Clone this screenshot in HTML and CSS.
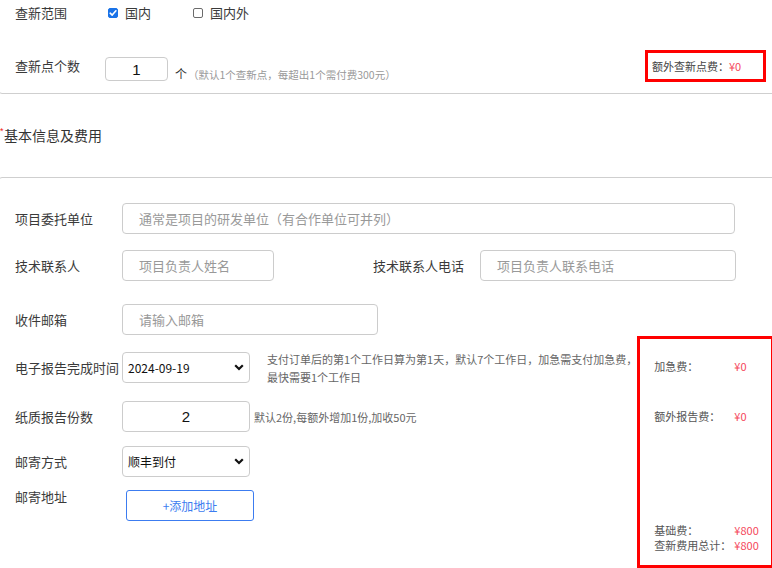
FILE: index.html
```html
<!DOCTYPE html>
<html lang="zh-CN">
<head>
<meta charset="utf-8">
<title>查新</title>
<link rel="stylesheet" href="styles.css">
</head>
<body>
<div class="top-box">
  <div class="row r-scope">
    <span class="label w93">查新范围</span>
    <span class="opt"><span class="cb checked"><svg width="8" height="8" viewBox="0 0 8 8"><path d="M1.2 4.2 L3.2 6.1 L6.9 1.8" fill="none" stroke="#fff" stroke-width="1.6" stroke-linecap="round" stroke-linejoin="round"/></svg></span>国内</span>
    <span class="opt opt2"><span class="cb"></span>国内外</span>
  </div>
  <div class="row r-count">
    <span class="label w90">查新点个数</span>
    <div class="num-input small">1</div>
    <span class="unit">个<span class="note">（默认1个查新点，每超出1个需付费300元）</span></span>
    <div class="fee-box">额外查新点费：<span class="money">¥0</span></div>
  </div>
</div>

<div class="title"><span class="star">*</span><span>基本信息及费用</span></div>

<div class="main-box">
  <div class="row fr">
    <span class="label">项目委托单位</span>
    <div class="field w613"><span class="ph">通常是项目的研发单位（有合作单位可并列）</span></div>
  </div>
  <div class="row fr mt16">
    <span class="label">技术联系人</span>
    <div class="field w152"><span class="ph">项目负责人姓名</span></div>
    <span class="label label2">技术联系人电话</span>
    <div class="field w256"><span class="ph">项目负责人联系电话</span></div>
  </div>
  <div class="row fr mt23">
    <span class="label">收件邮箱</span>
    <div class="field w256"><span class="ph">请输入邮箱</span></div>
  </div>
  <div class="lower">
    <div class="lower-left">
      <div class="row fr">
        <span class="label">电子报告完成时间</span>
        <div class="select"><span>2024-09-19</span><svg width="10" height="7" viewBox="0 0 10 7"><path d="M1.2 1.2 L5 5 L8.8 1.2" fill="none" stroke="#111" stroke-width="2.2"/></svg></div>
        <div class="hint hint-d">支付订单后的第1个工作日算为第1天，默认7个工作日，加急需支付加急费，<br>最快需要1个工作日</div>
      </div>
      <div class="row fr mt18">
        <span class="label">纸质报告份数</span>
        <div class="num-input big">2</div>
        <div class="hint hint-e">默认2份,每额外增加1份,加收50元</div>
      </div>
      <div class="row fr mt14">
        <span class="label">邮寄方式</span>
        <div class="select"><span>顺丰到付</span><svg width="10" height="7" viewBox="0 0 10 7"><path d="M1.2 1.2 L5 5 L8.8 1.2" fill="none" stroke="#111" stroke-width="2.2"/></svg></div>
      </div>
      <div class="row fr-top mt13">
        <span class="label addr-label">邮寄地址</span>
        <button class="add-btn" type="button">+添加地址</button>
      </div>
    </div>
    <div class="fee-panel">
      <div class="fee-group">
        <div class="fee-row"><span class="fee-label">加急费：</span><span class="money">¥0</span></div>
        <div class="fee-row mt35"><span class="fee-label">额外报告费：</span><span class="money">¥0</span></div>
      </div>
      <div class="fee-group">
        <div class="fee-row"><span class="fee-label">基础费：</span><span class="money">¥800</span></div>
        <div class="fee-row"><span class="fee-label">查新费用总计：</span><span class="money">¥800</span></div>
      </div>
    </div>
  </div>
</div>
</body>
</html>
```

FILE: styles.css
```css
* { box-sizing: border-box; }
html, body { margin: 0; padding: 0; overflow: hidden; }
body {
  width: 772px;
  height: 568px;
  background: #fff;
  color: #333;
  font-family: "Noto Sans CJK SC", "Noto Sans", "Liberation Sans", sans-serif;
  font-size: 13px;
}
.row { display: flex; align-items: center; }
.label { flex: none; width: 107px; font-size: 13px; line-height: 18px; color: #3a3a3a; white-space: nowrap; }
.w93 { width: 93px; }
.w90 { width: 90px; }

.top-box {
  margin: -10px -5px 0 -2px;
  border: 1px solid #cfcfcf;
  border-radius: 4px;
  padding: 9px 10px 11px 16px;
}
.r-scope { height: 26px; }
.opt { display: flex; align-items: center; font-size: 13px; line-height: 18px; color: #3a3a3a; }
.opt2 { margin-left: 42px; }
.cb {
  width: 10px; height: 10px; margin-right: 7px;
  border: 1.3px solid #6b6b6b; border-radius: 2px;
  display: flex; align-items: center; justify-content: center;
}
.cb.checked { background: #1a73e8; border-color: #1a73e8; }
.r-count { margin-top: 24px; height: 32px; }
.num-input {
  flex: none;
  border: 1px solid #ccc; border-radius: 4px;
  display: flex; align-items: center; justify-content: center;
  color: #111; font-family: "Liberation Sans", "Noto Sans CJK SC", sans-serif;
}
.num-input.small { width: 63px; height: 24px; margin-top: 6px; font-size: 15px; }
.num-input.big { width: 128px; height: 31px; font-size: 15px; }
.unit { align-self: flex-end; margin-left: 7px; font-size: 12px; line-height: 14px; color: #333; white-space: nowrap; }
.note { font-size: 10.5px; color: #999; margin-left: 1px; }
.fee-box {
  margin-left: auto;
  width: 121px; height: 32px;
  border: 3px solid #ff0000;
  padding-left: 4px;
  display: flex; align-items: center;
  font-size: 11px; color: #444; white-space: nowrap;
}
.money { color: #f5475b; font-size: 11px; }

.title { display: flex; align-items: flex-start; margin: 31px 0 32px 0; font-size: 14px; line-height: 20px; color: #333; }
.star { flex: none; color: #f02020; font-family: "Liberation Sans", sans-serif; font-size: 9px; line-height: 10px; width: 4px; margin-top: 1px; overflow: hidden; }

.main-box {
  margin: 0 -5px 0 -2px;
  border: 1px solid #cfcfcf;
  border-radius: 4px;
  padding: 25px 4px 20px 16px;
}
.fr { height: 31px; }
.fr-top { align-items: flex-start; }
.mt13 { margin-top: 13px; }
.mt14 { margin-top: 14px; }
.mt16 { margin-top: 16px; }
.mt18 { margin-top: 18px; }
.mt23 { margin-top: 23px; }
.mt35 { margin-top: 35px; }
.field {
  flex: none; height: 31px;
  border: 1px solid #ccc; border-radius: 4px;
  padding-left: 16px;
  display: flex; align-items: center;
}
.w613 { width: 613px; }
.w152 { width: 152px; }
.w256 { width: 256px; }
.ph { color: #999; font-size: 13px; white-space: nowrap; }
.label2 { margin-left: 99px; }

.lower { display: flex; align-items: flex-start; margin-top: 1px; }
.lower-left { flex: 1; padding-top: 16px; }
.select {
  flex: none; width: 128px; height: 31px;
  border: 1px solid #ccc; border-radius: 4px;
  padding: 0 5px 0 5px;
  display: flex; align-items: center; justify-content: space-between;
  font-size: 12px; color: #111;
}
.hint { font-size: 11px; line-height: 18px; color: #666; white-space: nowrap; }
.hint-d { margin-left: 17px; }
.hint-e { margin-left: 4px; }
.addr-label { margin-top: -1px; line-height: 16px; }
.add-btn {
  flex: none; margin: 0 0 0 4px;
  width: 128px; height: 31px;
  background: #fff;
  border: 1px solid #3c7cf0; border-radius: 3px;
  color: #3c7cf0; font-size: 12px;
  font-family: "Noto Sans CJK SC", sans-serif;
  padding: 0;
}
.fee-panel {
  flex: none; width: 137px; height: 232px;
  border: 3px solid #ff0000;
  padding: 20px 0 12px 14px;
  display: flex; flex-direction: column; justify-content: space-between;
}
.fee-row { display: flex; font-size: 11px; line-height: 15px; color: #555; white-space: nowrap; }
.fee-label { width: 80px; }
```
